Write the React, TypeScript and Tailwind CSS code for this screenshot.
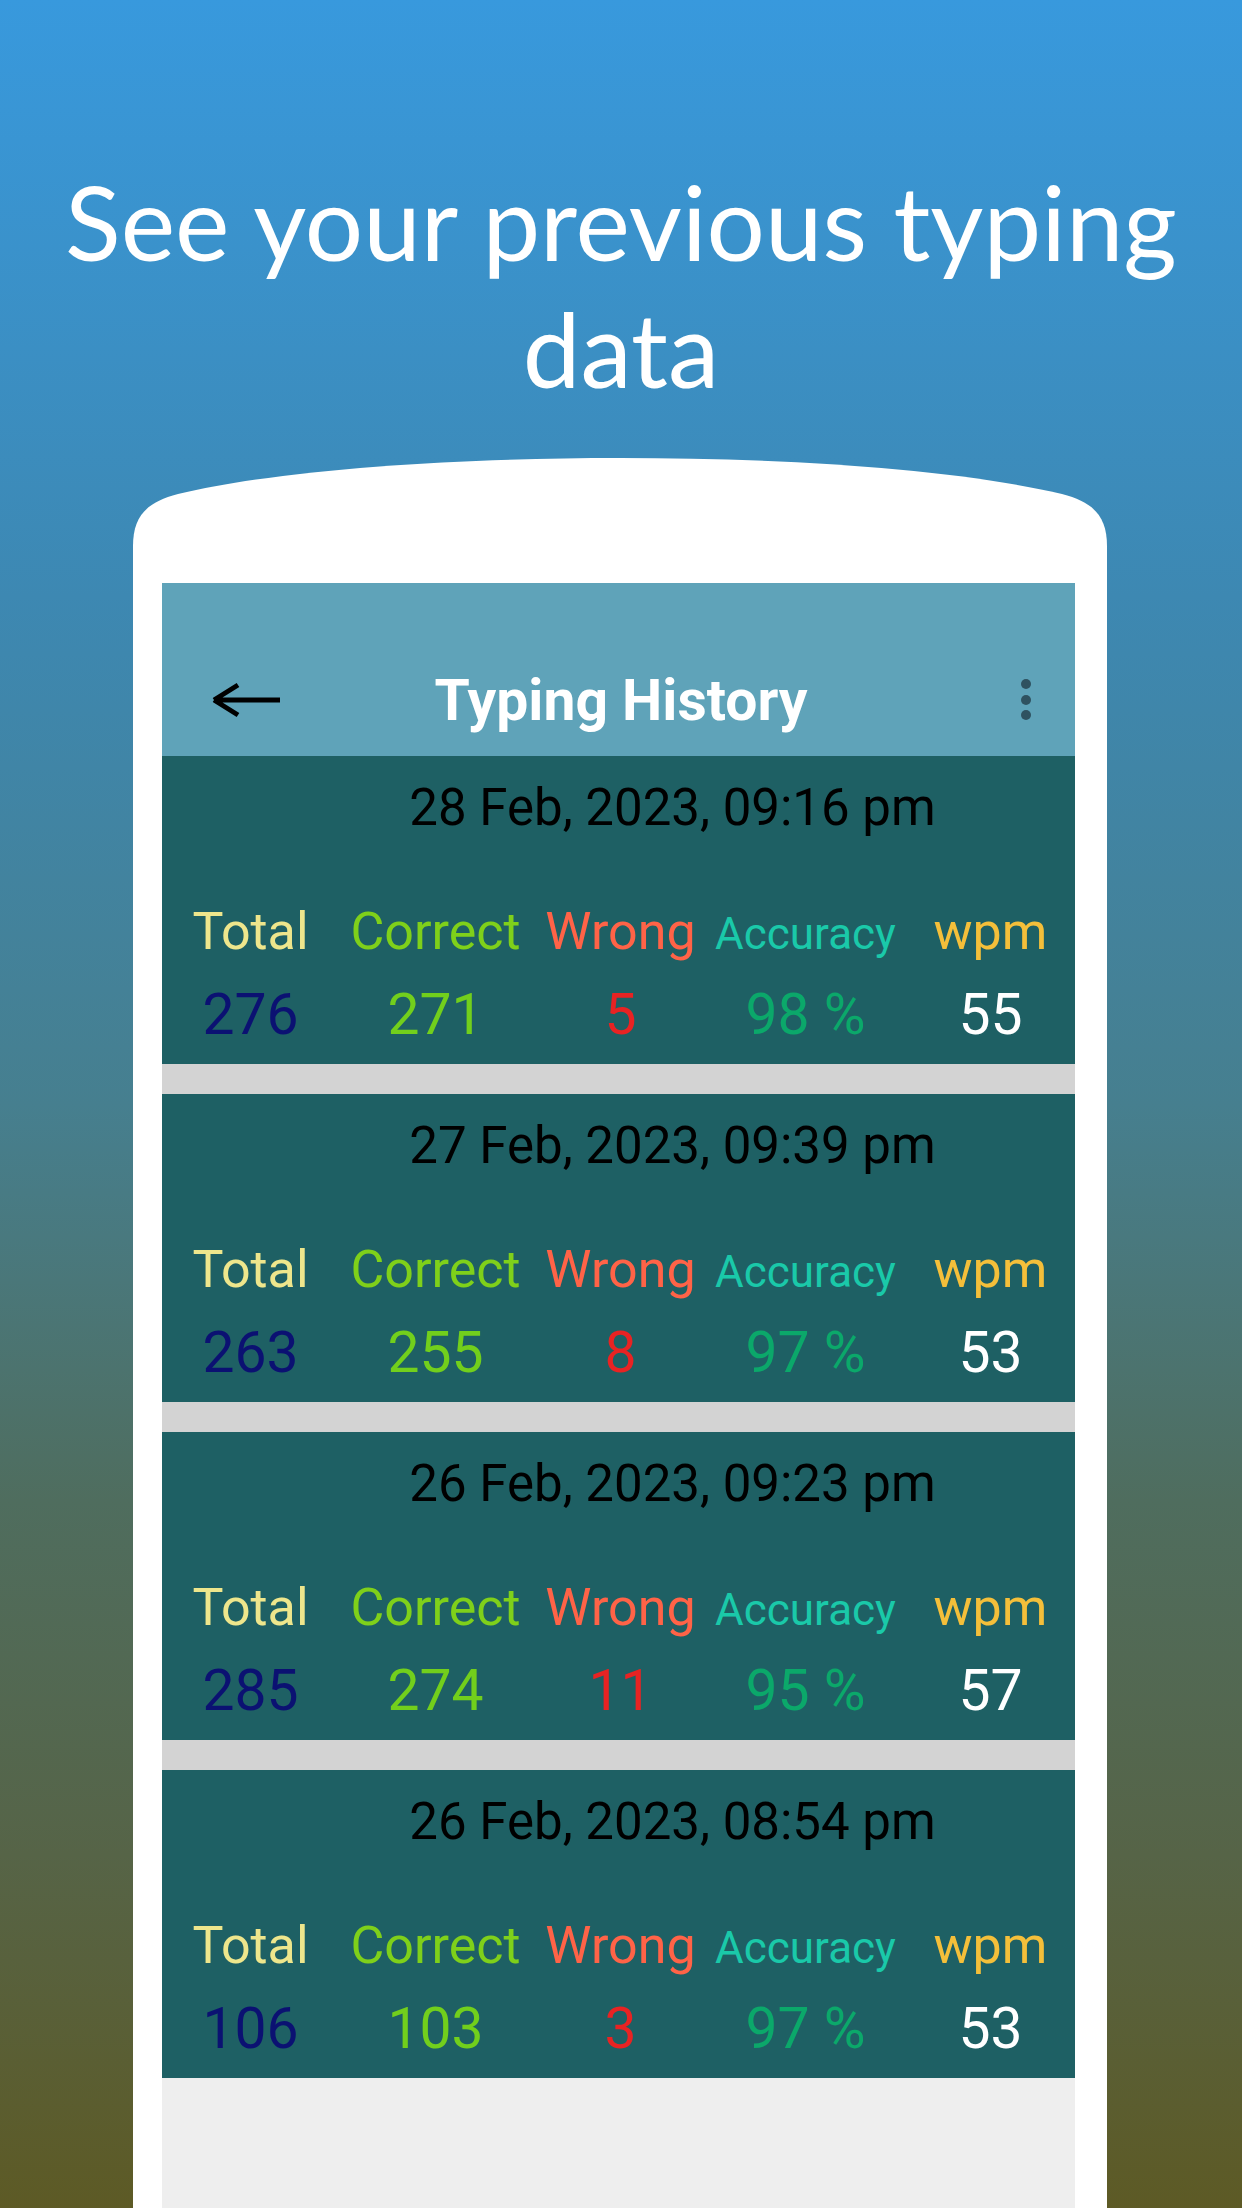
const history = [
  { date: "28 Feb, 2023, 09:16 pm", total: 276, correct: 271, wrong: 5, accuracy: 98, wpm: 55 },
  { date: "27 Feb, 2023, 09:39 pm", total: 263, correct: 255, wrong: 8, accuracy: 97, wpm: 53 },
  { date: "26 Feb, 2023, 09:23 pm", total: 285, correct: 274, wrong: 11, accuracy: 95, wpm: 57 },
  { date: "26 Feb, 2023, 08:54 pm", total: 106, correct: 103, wrong: 3, accuracy: 97, wpm: 53 }
];

function BackArrow() {
  return (
    <svg width="72" height="36" viewBox="0 0 72 36" fill="none" aria-hidden="true">
      <path d="M4 18H70M4 18L28 3M4 18L28 33" stroke="#000" strokeWidth="5" strokeLinejoin="miter" />
    </svg>
  );
}

function MoreDots() {
  return (
    <svg width="12" height="44" viewBox="0 0 12 44" aria-hidden="true">
      <circle cx="6" cy="6" r="5" fill="#2f5260" />
      <circle cx="6" cy="22" r="5" fill="#2f5260" />
      <circle cx="6" cy="37" r="5" fill="#2f5260" />
    </svg>
  );
}

function HistoryCard({ item }: { item: (typeof history)[number] }) {
  return (
    <article className="flex h-[308px] flex-col bg-[#1e6064] font-['Roboto',sans-serif]">
      <p className="pl-[108px] pt-[26px] text-center text-[51px] leading-none text-black">{item.date}</p>
      <div className="-ml-[4px] mt-[73px] grid grid-cols-[repeat(5,185px)] items-baseline text-center text-[52px] leading-none">
        <span className="text-[#eee68c]">Total</span>
        <span className="text-[#7fd01a]">Correct</span>
        <span className="text-[#ff6347]">Wrong</span>
        <span className="text-[44px] text-[#1ac9a9]">Accuracy</span>
        <span className="text-[#f4bf3a]">wpm</span>
      </div>
      <div className="-ml-[4px] mt-[28px] grid grid-cols-[repeat(5,185px)] text-center text-[57px] leading-none">
        <span className="text-[#0b1172]">{item.total}</span>
        <span className="text-[#72cf1c]">{item.correct}</span>
        <span className="text-[#e82323]">{item.wrong}</span>
        <span className="text-[#0ba86a]">{item.accuracy} %</span>
        <span className="text-white">{item.wpm}</span>
      </div>
    </article>
  );
}

export default function App() {
  return (
    <main className="relative h-[2208px] w-[1242px] overflow-hidden bg-[linear-gradient(180deg,#3899dd_0%,#3d88b2_27%,#467f8f_50%,#4f6d5e_68%,#566447_84%,#5d5a25_100%)]">
      <h1 className="pt-[158px] text-center font-['Lato',sans-serif] text-[103px] leading-[127px] text-white">
        See your previous typing
        <br />
        data
      </h1>

      <div className="ml-[133px] mt-[46px] w-[974px]">
        <svg className="block" width="974" height="92" viewBox="0 0 974 92" aria-hidden="true">
          <path
            d="M0 92V88C0 58 14 44 45 36C155 10 330 0 487 0C644 0 819 10 929 36C960 44 974 58 974 88V92Z"
            fill="#fff"
          />
        </svg>
        <div className="h-[1700px] bg-white pl-[29px] pr-[32px] pt-[33px]">
          <div className="h-full bg-[#eeeeee]">
            <header className="h-[173px] bg-[#5fa3b9] pt-[61px]">
              <div className="grid h-[112px] grid-cols-[1fr_auto_1fr] items-center pl-[48px] pr-[43px]">
                <span className="justify-self-start">
                  <BackArrow />
                </span>
                <h2 className="font-['Roboto',sans-serif] text-[57px] font-bold leading-none text-white">
                  Typing History
                </h2>
                <span className="justify-self-end">
                  <MoreDots />
                </span>
              </div>
            </header>

            <div className="flex flex-col gap-[30px] bg-[#d3d3d3]">
              {history.map((item) => (
                <HistoryCard item={item} key={item.date} />
              ))}
            </div>
          </div>
        </div>
      </div>
    </main>
  );
}
